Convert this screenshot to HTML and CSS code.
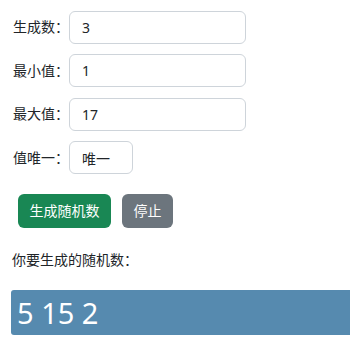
FILE: index.html
```html
<!DOCTYPE html>
<html lang="zh">
<head>
<meta charset="utf-8">
<link rel="stylesheet" href="styles.css">
</head>
<body>
<div class="form">
  <div class="row"><label class="lbl">生成数：</label><input class="ctl" type="text" value="3"></div>
  <div class="row"><label class="lbl">最小值：</label><input class="ctl" type="text" value="1"></div>
  <div class="row"><label class="lbl">最大值：</label><input class="ctl" type="text" value="17"></div>
  <div class="row"><label class="lbl">值唯一：</label><input class="ctl ctl-sm" type="text" value="唯一"></div>
</div>
<div class="actions">
  <button class="btn btn-green">生成随机数</button>
  <button class="btn btn-gray">停止</button>
</div>
<p class="caption">你要生成的随机数：</p>
<div class="result">5 15 2</div>
</body>
</html>
```
FILE: styles.css
```css
* { box-sizing: border-box; }
html, body { margin: 0; padding: 0; background: #fff; }
body {
  font-family: "Noto Sans", "Noto Sans CJK SC", sans-serif;
  font-size: 14px;
  color: #212529;
  width: 350px;
  overflow: hidden;
}
.form {
  display: flex;
  flex-direction: column;
  gap: 10.5px;
  padding: 10.5px 0 0 13px;
}
.row {
  display: flex;
  align-items: center;
  height: 33px;
}
.lbl {
  width: 56px;
  line-height: 20px;
}
.ctl {
  width: 177px;
  height: 33px;
  border: 1px solid #ced4da;
  border-radius: 6px;
  padding: 0 12px;
  font-family: "Noto Sans", "Noto Sans CJK SC", sans-serif;
  font-size: 14px;
  color: #212529;
  background: #fff;
  outline: none;
}
.ctl-sm { width: 64px; }
.actions {
  display: flex;
  gap: 11px;
  padding: 20px 0 0 18px;
}
.btn {
  height: 34px;
  padding: 0 11.5px;
  border: none;
  border-radius: 6px;
  color: #fff;
  font-family: "Noto Sans", "Noto Sans CJK SC", sans-serif;
  font-size: 14px;
  line-height: 34px;
}
.btn-green { background: #198754; }
.btn-gray { background: #6c757d; }
.caption {
  margin: 22px 0 0 12px;
  line-height: 20px;
}
.result {
  margin: 20px 0 0 11px;
  height: 45px;
  background: #568aaf;
  color: #fff;
  border-radius: 3px 0 0 3px;
  font-size: 29px;
  line-height: 45px;
  padding-left: 6px;
}
```
